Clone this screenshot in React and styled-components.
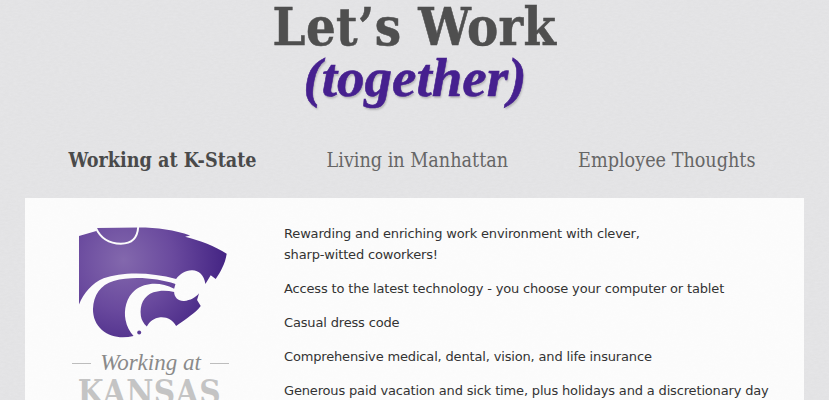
import styled, { createGlobalStyle } from "styled-components";

const paper = (base, strength) =>
  `url("data:image/svg+xml,%3Csvg xmlns='http://www.w3.org/2000/svg' width='300' height='300'%3E%3Cfilter id='n'%3E%3CfeTurbulence type='fractalNoise' baseFrequency='0.22 0.55' numOctaves='3' stitchTiles='stitch'/%3E%3CfeColorMatrix values='0 0 0 0 ${base} 0 0 0 0 ${base} 0 0 0 0 ${base} ${strength} 0 0 0 0'/%3E%3C/filter%3E%3Crect width='300' height='300' filter='url(%23n)'/%3E%3C/svg%3E")`;

const GlobalStyle = createGlobalStyle`
  html, body {
    margin: 0;
    padding: 0;
    height: 100%;
    overflow: hidden;
    background-color: #e3e3e5;
  }
`;

const benefits = [
  ["Rewarding and enriching work environment with clever,", "sharp-witted coworkers!"],
  ["Access to the latest technology - you choose your computer or tablet"],
  ["Casual dress code"],
  ["Comprehensive medical, dental, vision, and life insurance"],
  ["Generous paid vacation and sick time, plus holidays and a discretionary day"],
];

export default function App() {
  return (
    <Page>
      <GlobalStyle />
      <Header>
        <Title>Let’s Work</Title>
        <Together>(together)</Together>
      </Header>
      <Nav>
        <NavItem $active>Working at K-State</NavItem>
        <NavItem>Living in Manhattan</NavItem>
        <NavItem>Employee Thoughts</NavItem>
      </Nav>
      <Card>
        <Aside>
          <Wildcat />
          <WorkingAt>
            <Rule />
            <Script>Working at</Script>
            <Rule />
          </WorkingAt>
          <Kansas>KANSAS</Kansas>
        </Aside>
        <Benefits>
          {benefits.map((lines, index) => (
            <Benefit key={index}>
              {lines.map((line, i) => (
                <span key={i}>
                  {line}
                  {i < lines.length - 1 && <br />}
                </span>
              ))}
            </Benefit>
          ))}
        </Benefits>
      </Card>
    </Page>
  );
}

function Wildcat() {
  return (
    <LogoSvg viewBox="80 45 460 345" aria-label="Wildcat logo">
      <defs>
        <radialGradient id="cat" gradientUnits="userSpaceOnUse" cx="220" cy="150" r="330">
          <stop offset="0" stopColor="#8368ad" />
          <stop offset="0.45" stopColor="#6a4a9e" />
          <stop offset="1" stopColor="#3f1f80" />
        </radialGradient>
      </defs>
      <path
        fill="url(#cat)"
        d="M86 78 L138 63 L140 54 L266 52 C320 52 375 60 420 76 L405 80 C450 92 495 108 530 131 C526 160 512 185 497 207 L482 196 L466 222 C462 195 445 180 425 181 C405 182 390 192 378 207 C300 185 215 185 160 205 C125 220 100 250 86 284 Z"
      />
      <path
        d="M136 52 C150 84 178 101 212 101 C245 101 262 85 264 50"
        fill="none"
        stroke="#fbfbfb"
        strokeWidth="6"
      />
      <path
        fill="url(#cat)"
        d="M128 297 C130 255 150 225 190 213 C250 197 320 205 376 222 L372 236 C330 214 285 217 255 240 C228 262 220 300 226 330 C230 350 238 365 250 378 C215 386 180 382 155 360 C137 344 128 322 128 297 Z"
      />
      <path
        fill="url(#cat)"
        d="M272 318 C268 285 280 258 310 247 C330 240 352 241 372 246 C372 262 385 274 402 273 C420 272 438 262 447 250 L441 270 L452 288 C435 310 410 325 378 348 C368 330 350 320 330 322 C312 324 298 335 290 350 C280 340 274 330 272 318 Z"
      />
      <circle cx="267" cy="368" r="6" fill="#5b3c96" />
    </LogoSvg>
  );
}

const Page = styled.div`
  height: 400px;
  overflow: hidden;
  display: flex;
  flex-direction: column;
  background-color: #e6e6e8;
  background-image: ${paper(0.6, 0.2)};
`;

const Header = styled.header`
  flex: none;
  display: flex;
  flex-direction: column;
  align-items: center;
`;

const Title = styled.h1`
  margin: 0;
  height: 54px;
  line-height: 54px;
  font-family: "DejaVu Serif Condensed", "DejaVu Serif", serif;
  font-size: 52px;
  font-weight: 700;
  letter-spacing: 0.4px;
  -webkit-text-stroke: 0.5px #4f4f4f;
  color: #4f4f4f;
`;

const Together = styled.div`
  height: 62px;
  line-height: 47px;
  padding-left: 1px;
  font-family: "Liberation Serif", serif;
  font-size: 55px;
  font-weight: 700;
  font-style: italic;
  -webkit-text-stroke: 0.6px #46208f;
  color: #46208f;
  text-shadow: 1px 2px 2px rgba(0, 0, 0, 0.2);
`;

const Nav = styled.nav`
  flex: none;
  display: flex;
  justify-content: center;
  gap: 70px;
  height: 82px;
  padding: 32px 5px 0 0;
  box-sizing: border-box;
`;

const NavItem = styled.a`
  font-family: "DejaVu Serif Condensed", "DejaVu Serif", serif;
  font-size: 19.6px;
  line-height: 26px;
  font-weight: ${(p) => (p.$active ? 700 : 400)};
  color: ${(p) => (p.$active ? "#4a4a4a" : "#666666")};
`;

const Card = styled.main`
  flex: 1;
  min-height: 0;
  margin: 0 25px;
  padding: 25px 0 0 52px;
  display: flex;
  background-color: #fcfcfc;
  background-image: ${paper(0.7, 0.04)};
`;

const Aside = styled.div`
  width: 207px;
  flex-shrink: 0;
  display: flex;
  flex-direction: column;
  align-items: flex-start;
`;

const LogoSvg = styled.svg`
  flex: none;
  width: 153px;
  height: 115px;
  margin-top: 2px;
`;

const WorkingAt = styled.div`
  flex: none;
  width: 157px;
  display: flex;
  align-items: center;
  gap: 9px;
  margin-top: 10px;
  margin-left: -5px;
`;

const Rule = styled.span`
  flex: 1;
  height: 1px;
  background-color: #bdbdbd;
`;

const Script = styled.span`
  font-family: "Liberation Serif", serif;
  font-style: italic;
  font-size: 23px;
  line-height: 26px;
  color: #8a8a8a;
`;

const Kansas = styled.div`
  flex: none;
  width: 157px;
  margin-left: -6px;
  text-align: center;
  font-family: "DejaVu Serif Condensed", "DejaVu Serif", serif;
  font-weight: 700;
  font-size: 33px;
  line-height: 34px;
  letter-spacing: 0.5px;
  color: #c4c4c4;
`;

const Benefits = styled.div`
  display: flex;
  flex-direction: column;
  gap: 13px;
`;

const Benefit = styled.p`
  margin: 0;
  flex: none;
  font-family: "DejaVu Sans", sans-serif;
  font-size: 13px;
  letter-spacing: -0.16px;
  line-height: 21px;
  color: #333333;
  white-space: nowrap;
`;
